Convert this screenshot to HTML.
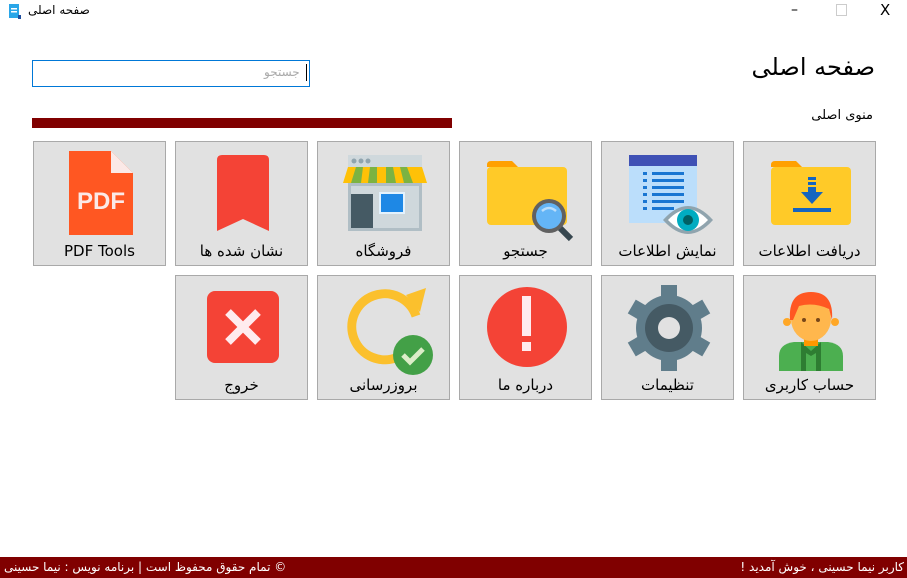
<!DOCTYPE html>
<html><head><meta charset="utf-8"><style>
body{margin:0;width:907px;height:578px;background:#fff;position:relative;overflow:hidden;font-family:"DejaVu Sans","Liberation Sans",sans-serif;}
.a{position:absolute}
.t{position:absolute;width:131px;height:123px;background:#e1e1e1;border:1px solid #a9a9a9;}
.t svg{position:absolute;left:0;top:0}
.l{position:absolute;left:0;right:0;top:100px;text-align:center;font-size:15px;color:#000;direction:rtl}
</style></head><body>
<svg class="a" style="left:9px;top:4px" width="12" height="16"><rect x="0" y="0" width="10" height="14" fill="#2aa6e8"/><rect x="2" y="4" width="6" height="1.5" fill="#fff"/><rect x="2" y="7" width="6" height="1.5" fill="#fff"/><rect x="9" y="11" width="3" height="4" fill="#1f4f9f"/></svg>
<div class="a" style="left:28px;top:3px;font-size:12px;direction:rtl">صفحه اصلی</div>
<div class="a" style="left:791px;top:2px;font-size:14px">–</div>
<div class="a" style="left:836px;top:4px;width:9px;height:10px;border:1px solid #ccc"></div>
<div class="a" style="left:880px;top:1px;font-size:15px">X</div>
<div class="a" style="left:32px;top:60px;width:276px;height:25px;border:1px solid #0078d7"></div>
<div class="a" style="left:264px;top:65px;font-size:12px;color:#aaa;direction:rtl">جستجو</div>
<div class="a" style="left:306px;top:64px;width:1px;height:17px;background:#000"></div>
<div class="a" style="right:32px;top:53px;font-size:24px;direction:rtl">صفحه اصلی</div>
<div class="a" style="right:34px;top:108px;font-size:13px;direction:rtl">منوی اصلی</div>
<div class="a" style="left:32px;top:118px;width:420px;height:10px;background:#800000"></div>

<div class="t" style="left:33px;top:141px"><svg width="131" height="100"><path d="M35 9H77L99 31V93H35Z" fill="#ff5722"/><path d="M77 9L99 31H77Z" fill="#fbe9e7"/><text x="67" y="67" text-anchor="middle" font-family="Liberation Sans" font-weight="bold" font-size="24" fill="#fbe9e7">PDF</text></svg><div class="l">PDF Tools</div></div>
<div class="t" style="left:175px;top:141px"><svg width="131" height="100"><path d="M46 13H88Q93 13 93 18V89L67 77L41 89V18Q41 13 46 13Z" fill="#f44336"/></svg><div class="l">نشان شده ها</div></div>
<div class="t" style="left:317px;top:141px"><svg width="131" height="100"><rect x="30" y="13" width="74" height="76" fill="#b0bec5"/><rect x="30" y="13" width="74" height="12" fill="#cfd8dc"/><circle cx="36" cy="19" r="2.5" fill="#90a4ae"/><circle cx="43" cy="19" r="2.5" fill="#90a4ae"/><circle cx="50" cy="19" r="2.5" fill="#90a4ae"/><rect x="33" y="44" width="68" height="42" fill="#cfd8dc"/><path d="M30 25H104L109 41H25Z" fill="#ffc107"/><path d="M38 25H45L43 41H33ZM52 25H59L59 41H50ZM68 25H75L78 41H68ZM82 25H89L95 41H86Z" fill="#7cb342"/><rect x="33" y="52" width="22" height="34" fill="#455a64"/><rect x="61" y="50" width="26" height="22" fill="#e3f2fd"/><rect x="63" y="52" width="22" height="18" fill="#1e88e5"/></svg><div class="l">فروشگاه</div></div>
<div class="t" style="left:459px;top:141px"><svg width="131" height="100"><path d="M27 23Q27 19 31 19H52L58 25H27Z" fill="#ffa000"/><rect x="27" y="25" width="80" height="58" rx="4" fill="#ffca28"/><line x1="96" y1="82" x2="111" y2="97" stroke="#37474f" stroke-width="6"/><circle cx="89" cy="74" r="17" fill="#616161"/><circle cx="89" cy="74" r="13" fill="#64b5f6"/><path d="M82 69Q89 63 96 69" stroke="#bbdefb" stroke-width="2.5" fill="none"/></svg><div class="l">جستجو</div></div>
<div class="t" style="left:601px;top:141px"><svg width="131" height="100"><rect x="27" y="13" width="68" height="68" fill="#bbdefb"/><rect x="27" y="13" width="68" height="11" fill="#3f51b5"/><g fill="#1976d2"><rect x="41" y="30" width="4" height="3"/><rect x="50" y="30" width="32" height="3"/><rect x="41" y="37" width="4" height="3"/><rect x="50" y="37" width="32" height="3"/><rect x="41" y="44" width="4" height="3"/><rect x="50" y="44" width="32" height="3"/><rect x="41" y="51" width="4" height="3"/><rect x="50" y="51" width="32" height="3"/><rect x="41" y="58" width="4" height="3"/><rect x="50" y="58" width="32" height="3"/><rect x="41" y="65" width="4" height="3"/><rect x="50" y="65" width="22" height="3"/></g><path d="M61 78Q86 50 111 78Q86 106 61 78Z" fill="#90a4ae"/><path d="M66 78Q86 57 106 78Q86 99 66 78Z" fill="#fff"/><circle cx="86" cy="78" r="11" fill="#00acc1"/><circle cx="86" cy="78" r="5" fill="#006064"/></svg><div class="l">نمایش اطلاعات</div></div>
<div class="t" style="left:743px;top:141px"><svg width="131" height="100"><path d="M27 23Q27 19 31 19H52L58 25H27Z" fill="#ffa000"/><rect x="27" y="25" width="80" height="58" rx="4" fill="#ffca28"/><g fill="#1565c0"><rect x="64" y="35" width="8" height="3"/><rect x="64" y="40" width="8" height="3"/><rect x="64" y="45" width="8" height="5"/><path d="M57 50H79L68 62Z"/><rect x="49" y="66" width="38" height="4"/></g></svg><div class="l">دریافت اطلاعات</div></div>

<div class="t" style="left:175px;top:275px"><svg width="131" height="100"><rect x="31" y="15" width="72" height="72" rx="8" fill="#f44336"/><path d="M52 36L82 66M82 36L52 66" stroke="#ffebee" stroke-width="8"/></svg><div class="l">خروج</div></div>
<div class="t" style="left:317px;top:275px"><svg width="131" height="100"><path d="M98 40A33 33 0 1 0 80 81" stroke="#fbc02d" stroke-width="9" fill="none"/><path d="M88 19L108 12L102 36Z" fill="#fbc02d"/><circle cx="95" cy="79" r="20" fill="#43a047"/><path d="M85 79L92 86L105 73" stroke="#dcedc8" stroke-width="5" fill="none"/></svg><div class="l">بروزرسانی</div></div>
<div class="t" style="left:459px;top:275px"><svg width="131" height="100"><circle cx="67" cy="51" r="40" fill="#f44336"/><rect x="62" y="20" width="9" height="40" fill="#ffebee"/><rect x="62" y="66" width="9" height="9" fill="#ffebee"/></svg><div class="l">درباره ما</div></div>
<div class="t" style="left:601px;top:275px"><svg width="131" height="100"><g transform="translate(67 52)" fill="#607d8b"><circle r="33"/><g id="tt"><rect x="-8" y="-43" width="16" height="18"/><rect x="-8" y="25" width="16" height="18"/></g><use href="#tt" transform="rotate(60)"/><use href="#tt" transform="rotate(120)"/><circle r="24" fill="#455a64"/><circle r="11" fill="#e1e1e1"/></g></svg><div class="l">تنظیمات</div></div>
<div class="t" style="left:743px;top:275px"><svg width="131" height="100"><path d="M35 95V80Q35 68 50 66H84Q99 68 99 80V95Z" fill="#4caf50"/><path d="M57 66L67 75L77 66V95H72V77L67 80L62 77V95H57Z" fill="#2e7d32"/><rect x="60" y="56" width="14" height="14" fill="#ff9800"/><circle cx="43" cy="46" r="4" fill="#ffa726"/><circle cx="91" cy="46" r="4" fill="#ffa726"/><ellipse cx="67" cy="43" rx="20" ry="22" fill="#ffb74d"/><path d="M46 44Q44 16 67 16Q90 16 88 44L85 33Q70 26 55 30L49 44Z" fill="#ff5722"/><circle cx="60" cy="44" r="2" fill="#784719"/><circle cx="74" cy="44" r="2" fill="#784719"/></svg><div class="l">حساب کاربری</div></div>

<div class="a" style="left:0;top:557px;width:907px;height:21px;background:#800000;color:#fff;font-size:12px">
<div class="a" style="left:4px;top:3px;direction:rtl">© تمام حقوق محفوظ است | برنامه نویس : نیما حسینی</div>
<div class="a" style="right:3px;top:3px;direction:rtl">کاربر نیما حسینی ، خوش آمدید !</div>
</div>
</body></html>
